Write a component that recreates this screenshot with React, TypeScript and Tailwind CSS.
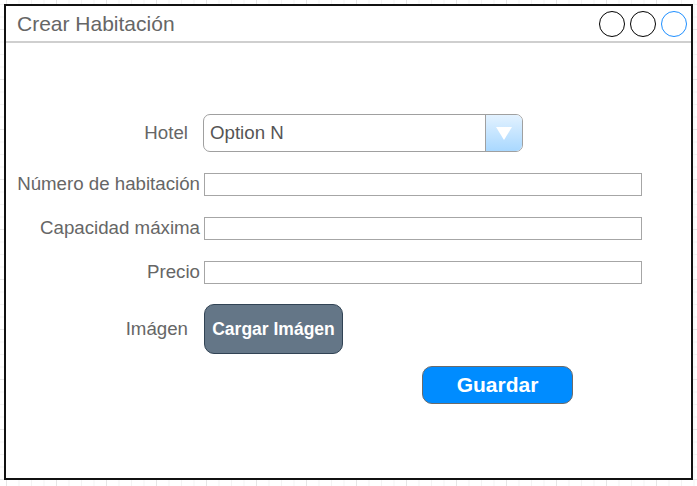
import { useState } from "react";

const font = { fontFamily: '"Liberation Sans", Arial, sans-serif' };

function Field({ label }: { label: string }) {
  return (
    <div className="flex h-[23px] items-center">
      <div className="w-[183px] shrink-0 whitespace-nowrap text-right text-[18.7px] text-[#666666]">{label}</div>
      <div className="ml-[4px] h-[23px] w-[438px] border-[1.5px] border-[#a6a6a6] bg-white" />
    </div>
  );
}

export default function App() {
  const [hotel] = useState("Option N");

  return (
    <div
      className="h-[486px] w-[697px] overflow-hidden bg-white bg-[linear-gradient(#e6e6e6_1px,transparent_1px),linear-gradient(90deg,#e6e6e6_1px,transparent_1px),linear-gradient(#f3f3f3_1px,transparent_1px),linear-gradient(90deg,#f3f3f3_1px,transparent_1px)] bg-[length:50px_50px,50px_50px,12.5px_12.5px,12.5px_12.5px] bg-[position:6px_29px,6px_29px,6px_29px,6px_29px] pl-[4px] pt-[4px]"
      style={font}
    >
      {/* window */}
      <div className="flex h-[476px] w-[689px] flex-col border-2 border-[#111] bg-white">
        {/* title bar */}
        <div className="flex h-[37px] shrink-0 items-center justify-between border-b-2 border-[#cfcfcf] pl-[11px] pr-[4px]">
          <span className="text-[21px] text-[#666666]">Crear Habitación</span>
          <div className="flex gap-[5px]">
            <div className="h-[26px] w-[26px] rounded-full border-[1.5px] border-black" />
            <div className="h-[26px] w-[26px] rounded-full border-[1.5px] border-black" />
            <div className="h-[26px] w-[26px] rounded-full border-[1.5px] border-[#1e8fff]" />
          </div>
        </div>

        {/* form */}
        <div className="flex flex-col pl-[11px] pt-[71px]">
          <div className="flex h-[38px] items-center">
            <div className="w-[171px] shrink-0 text-right text-[18.7px] text-[#666666]">Hotel</div>
            <div className="ml-[15px] flex h-[38px] w-[320px] overflow-hidden rounded-[7px] border-[1.5px] border-[#a0a0a0] bg-white">
              <div className="flex flex-1 items-center pl-[6px] text-[18.7px] text-[#555555]">{hotel}</div>
              <div className="flex w-[37px] items-center justify-center border-l-[1.5px] border-[#a0a0a0] bg-[linear-gradient(#e3f2ff,#a9d8ff)]">
                <svg width="16" height="13" viewBox="0 0 16 13">
                  <polygon points="0,0 16,0 8,13" fill="#ffffff" />
                </svg>
              </div>
            </div>
          </div>

          <div className="mt-[21px] flex flex-col gap-[21px]">
            <Field label="Número de habitación" />
            <Field label="Capacidad máxima" />
            <Field label="Precio" />
          </div>

          <div className="mt-[20px] flex h-[50px] items-center">
            <div className="w-[171px] shrink-0 text-right text-[18.7px] text-[#666666]">Imágen</div>
            <button className="ml-[16px] flex h-[50px] w-[139px] items-center justify-center whitespace-nowrap rounded-[10px] border-[1.5px] border-[#314354] bg-[#647687] text-[17.5px] font-bold text-white">
              Cargar Imágen
            </button>
          </div>

          <div className="mt-[12px] flex">
            <button className="ml-[405px] flex h-[38px] w-[151px] items-center justify-center rounded-[10px] border-[1.5px] border-[#6b6b6b] bg-[#008cff] text-[21px] font-bold text-white">
              Guardar
            </button>
          </div>
        </div>
      </div>
    </div>
  );
}
